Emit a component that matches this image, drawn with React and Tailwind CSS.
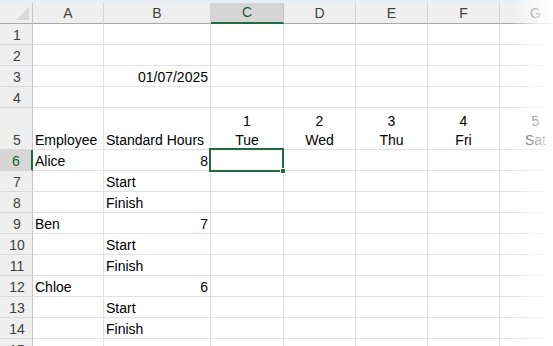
import React from "react";

const COLS = [
  { l: "A", w: "w-[71px]" },
  { l: "B", w: "w-[107px]" },
  { l: "C", w: "w-[73px]" },
  { l: "D", w: "w-[72px]" },
  { l: "E", w: "w-[72px]" },
  { l: "F", w: "w-[72px]" },
  { l: "G", w: "w-[72px]" },
];

const ROWS = [
  { n: 1, cells: {} },
  { n: 2, cells: {} },
  { n: 3, cells: { 1: { t: "01/07/2025", a: "r" } } },
  { n: 4, cells: {} },
  {
    n: 5,
    tall: true,
    cells: {
      0: { t: "Employee" },
      1: { t: "Standard Hours" },
      2: { t: ["1", "Tue"], a: "c" },
      3: { t: ["2", "Wed"], a: "c" },
      4: { t: ["3", "Thu"], a: "c" },
      5: { t: ["4", "Fri"], a: "c" },
      6: { t: ["5", "Sat"], a: "c" },
    },
  },
  { n: 6, sel: true, cells: { 0: { t: "Alice" }, 1: { t: "8", a: "r" } } },
  { n: 7, cells: { 1: { t: "Start" } } },
  { n: 8, cells: { 1: { t: "Finish" } } },
  { n: 9, cells: { 0: { t: "Ben" }, 1: { t: "7", a: "r" } } },
  { n: 10, cells: { 1: { t: "Start" } } },
  { n: 11, cells: { 1: { t: "Finish" } } },
  { n: 12, cells: { 0: { t: "Chloe" }, 1: { t: "6", a: "r" } } },
  { n: 13, cells: { 1: { t: "Start" } } },
  { n: 14, cells: { 1: { t: "Finish" } } },
  { n: 15, cells: {} },
];

function Cell({ col, data }) {
  const align =
    data?.a === "r" ? "justify-end text-right" : data?.a === "c" ? "justify-center text-center" : "justify-start";
  return (
    <div
      className={`${col.w} shrink-0 border-r border-b border-[#e1e1e1] flex items-end ${align} px-[2px] pb-px text-[14px] leading-4 text-black whitespace-nowrap`}
    >
      {data ? (
        Array.isArray(data.t) ? (
          <div className="flex flex-col items-center leading-[21px]">
            <span>{data.t[0]}</span>
            <span className="leading-4">{data.t[1]}</span>
          </div>
        ) : (
          <span>{data.t}</span>
        )
      ) : null}
    </div>
  );
}

export default function App() {
  return (
    <div
      className="relative w-[553px] h-[346px] overflow-hidden bg-white"
      style={{ fontFamily: '"Liberation Sans", Arial, sans-serif' }}
    >
      <div className="h-[3px] bg-[#e8eef4]" />
      {/* header row */}
      <div className="flex h-[21px]">
        <div className="relative w-[33px] shrink-0 bg-[#efefef] border-r border-b border-r-[#c6c6c6] border-b-[#a8a8a8]">
          <div
            className="absolute right-[3px] bottom-[3px] w-[13px] h-[13px] bg-[#dadada]"
            style={{ clipPath: "polygon(100% 0, 100% 100%, 0 100%)" }}
          />
        </div>
        {COLS.map((c, i) =>
          i === 2 ? (
            <div
              key={c.l}
              className={`${c.w} shrink-0 bg-[#d6d6d6] border-r border-r-[#c6c6c6] border-b-2 border-b-[#1d6b40] flex items-center justify-center text-[14px] text-[#135f33]`}
            >
              {c.l}
            </div>
          ) : (
            <div
              key={c.l}
              className={`${c.w} shrink-0 bg-[#efefef] border-r border-b border-r-[#d4d4d4] border-b-[#a8a8a8] flex items-center justify-center text-[14px] text-[#404040]`}
            >
              {c.l}
            </div>
          )
        )}
      </div>
      {ROWS.map((r) => (
        <div key={r.n} className={`flex ${r.tall ? "h-[42px]" : "h-[21px]"}`}>
          {r.sel ? (
            <div className="w-[33px] shrink-0 bg-[#d6d6d6] border-b border-b-[#d4d4d4] border-r-2 border-r-[#1d6b40] flex items-end justify-center pl-[1px] pb-px text-[14px] leading-4 text-[#135f33]">
              {r.n}
            </div>
          ) : (
            <div className="w-[33px] shrink-0 bg-[#efefef] border-r border-b border-r-[#c6c6c6] border-b-[#d9d9d9] flex items-end justify-center pl-[2px] pb-px text-[14px] leading-4 text-[#404040]">
              {r.n}
            </div>
          )}
          {COLS.map((c, i) => (
            <Cell key={c.l} col={c} data={r.cells[i]} />
          ))}
        </div>
      ))}
      {/* selection box on C6 */}
      <div className="absolute left-[209px] top-[148px] w-[75px] h-[24px] border-2 border-[#1d6b40]" />
      <div className="absolute left-[280px] top-[168px] w-[6px] h-[6px] bg-[#1d6b40] border border-white" />
      {/* right fade */}
      <div className="absolute right-0 top-0 h-full w-[42px] bg-gradient-to-r from-white/0 via-white/60 to-white/95" />
    </div>
  );
}
